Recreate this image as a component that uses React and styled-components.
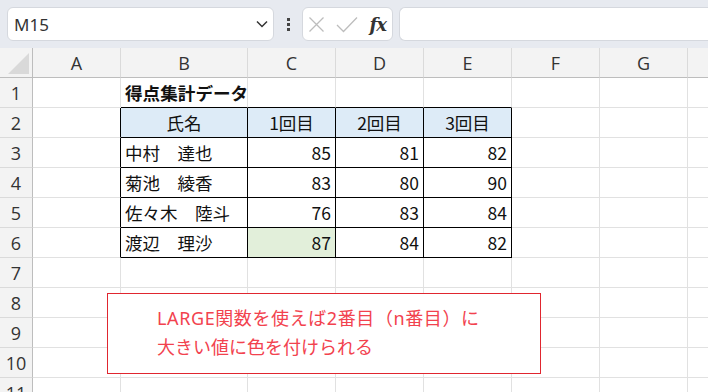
import React from 'react';
import styled, { createGlobalStyle } from 'styled-components';

const GlobalStyle = createGlobalStyle`
    body {
        margin: 0;
        overflow: hidden;
        background: #fff;
        font-family: "Noto Sans", "Noto Sans CJK JP", sans-serif;
    }
`;

const Page = styled.div`
    width: 708px;
    height: 392px;
    overflow: hidden;
    display: flex;
    flex-direction: column;
`;

const Toolbar = styled.div`
    height: 48px;
    flex: none;
    background: #e7eaf0;
    display: flex;
    align-items: center;
    padding: 0 0 0 7px;
    box-sizing: border-box;
`;

const Field = styled.div`
    height: 34px;
    box-sizing: border-box;
    background: #fff;
    border: 1px solid #d5d8de;
    border-radius: 6px;
    display: flex;
    align-items: center;
`;

const NameBox = styled(Field)`
    width: 267px;
    padding: 0 5px 0 6px;
    justify-content: space-between;
    font-size: 17px;
    color: #333;
`;

const Dots = styled.div`
    width: 28px;
    display: flex;
    flex-direction: column;
    align-items: center;
    gap: 2px;

    & > span {
        width: 3px;
        height: 3px;
        background: #444;
    }
`;

const FxGroup = styled(Field)`
    width: 91px;
    padding: 0 6px 0 5px;
    justify-content: space-between;
`;

const Fx = styled.span`
    font-family: "DejaVu Serif", "Liberation Serif", serif;
    font-style: italic;
    font-weight: bold;
    font-size: 18px;
    color: #333;
    letter-spacing: -1px;
`;

const FormulaInput = styled(Field)`
    flex: 1;
    margin-left: 6px;
    border-right: none;
    border-radius: 6px 0 0 6px;
`;

const Sheet = styled.div`
    position: relative;
    flex: 1;
    overflow: hidden;
    display: grid;
    grid-template-columns: 33px 88px 127px repeat(6, 88px);
    grid-auto-rows: 30px;
    grid-template-rows: 30px;
`;

const Corner = styled.div`
    background: #f3f3f3;
    border-right: 1px solid #bdbdbd;
    border-bottom: 1px solid #bdbdbd;
    position: relative;

    &::after {
        content: "";
        position: absolute;
        right: 3px;
        bottom: 3px;
        width: 0;
        height: 0;
        border-left: 21px solid transparent;
        border-bottom: 21px solid #d9d9d9;
    }
`;

const ColHead = styled.div`
    background: #f3f3f3;
    border-right: 1px solid #dadada;
    border-bottom: 1px solid #bdbdbd;
    display: flex;
    align-items: center;
    justify-content: center;
    font-family: "Open Sans", sans-serif;
    font-size: 18px;
    color: #333;
`;

const RowHead = styled.div`
    background: #f3f3f3;
    border-right: 1px solid #bdbdbd;
    border-bottom: 1px solid #dadada;
    display: flex;
    align-items: center;
    justify-content: center;
    font-family: "Open Sans", sans-serif;
    font-size: 18px;
    color: #333;
`;

const Cell = styled.div`
    box-sizing: border-box;
    border-right: 1px solid ${p => (p.$edgeRight ? '#000' : '#e1e1e1')};
    border-bottom: 1px solid ${p => (p.$edgeBottom ? '#000' : '#e1e1e1')};
    background: ${p => p.$fill || '#fff'};
    display: flex;
    align-items: center;
    justify-content: ${p => p.$align || 'flex-start'};
    padding: 0 4px 0 4px;
    font-family: "Noto Sans CJK JP", sans-serif;
    font-size: ${p => (p.$bold ? '17.6px' : '17.5px')};
    font-weight: ${p => (p.$bold ? 700 : 400)};
    color: #111;
    white-space: nowrap;
    overflow: ${p => (p.$bold ? 'visible' : 'hidden')};
`;

const Note = styled.div`
    position: absolute;
    left: 107px;
    top: 245px;
    width: 434px;
    height: 81px;
    box-sizing: border-box;
    background: #fff;
    border: 1px solid #e0262f;
    padding: 10px 0 0 49px;
    font-family: "Noto Sans", "Noto Sans CJK JP", sans-serif;
    font-size: 18px;
    line-height: 29px;
    color: #f2424e;
`;

const NoteLine = styled.div`
    white-space: nowrap;
    letter-spacing: ${p => p.$spacing || '0'};
`;

const letters = ['A', 'B', 'C', 'D', 'E', 'F', 'G', ''];

const HEAD = '#ddebf7';
const GREEN = '#e2efda';

const rows = [
    [null, { v: '得点集計データ', bold: true }, null, null, null],
    [null, { v: '氏名', h: true }, { v: '1回目', h: true }, { v: '2回目', h: true }, { v: '3回目', h: true }],
    [null, { v: '中村　達也' }, { v: 85 }, { v: 81 }, { v: 82 }],
    [null, { v: '菊池　綾香' }, { v: 83 }, { v: 80 }, { v: 90 }],
    [null, { v: '佐々木　陸斗' }, { v: 76 }, { v: 83 }, { v: 84 }],
    [null, { v: '渡辺　理沙' }, { v: 87, fill: GREEN }, { v: 84 }, { v: 82 }],
];

const ChevronIcon = () => (
    <svg width="12" height="8" viewBox="0 0 12 8">
        <path d="M1 1.5 L6 6.5 L11 1.5" fill="none" stroke="#333" strokeWidth="1.5" />
    </svg>
);

const CrossIcon = () => (
    <svg width="17" height="17" viewBox="0 0 17 17">
        <path d="M1.5 1.5 L15.5 15.5 M15.5 1.5 L1.5 15.5" stroke="#bdbdbd" strokeWidth="1.3" fill="none" />
    </svg>
);

const CheckIcon = () => (
    <svg width="22" height="17" viewBox="0 0 22 17">
        <path d="M1 9 L7.5 15.5 L21 1.5" stroke="#bdbdbd" strokeWidth="1.3" fill="none" />
    </svg>
);

const App = () => {
    const inTable = (r, c) => r >= 1 && r <= 5 && c >= 1 && c <= 4;

    return (
        <Page>
            <GlobalStyle />
            <Toolbar>
                <NameBox>
                    <span>M15</span>
                    <ChevronIcon />
                </NameBox>
                <Dots><span /><span /><span /></Dots>
                <FxGroup>
                    <CrossIcon />
                    <CheckIcon />
                    <Fx>fx</Fx>
                </FxGroup>
                <FormulaInput />
            </Toolbar>

            <Sheet>
                <Corner />
                {letters.map((l, i) => <ColHead key={i}>{l}</ColHead>)}

                {Array.from({ length: 11 }).map((_, r) => {
                    const data = rows[r] || [];
                    return (
                        <React.Fragment key={r}>
                            <RowHead>{r + 1}</RowHead>
                            {letters.map((l, c) => {
                                const d = data[c];
                                const table = inTable(r, c);
                                const edgeRight = table || (c === 0 && r >= 1 && r <= 5);
                                const edgeBottom = table || (r === 0 && c >= 1 && c <= 4);
                                const isNum = d && typeof d.v === 'number';
                                return (
                                    <Cell
                                        key={c}
                                        $edgeRight={edgeRight}
                                        $edgeBottom={edgeBottom}
                                        $fill={d && d.h ? HEAD : d && d.fill}
                                        $align={d && d.h ? 'center' : isNum ? 'flex-end' : 'flex-start'}
                                        $bold={d && d.bold}
                                    >
                                        {d ? d.v : ''}
                                    </Cell>
                                );
                            })}
                        </React.Fragment>
                    );
                })}

                <Note>
                    <NoteLine $spacing="0.6px">LARGE関数を使えば2番目（n番目）に</NoteLine>
                    <NoteLine>大きい値に色を付けられる</NoteLine>
                </Note>
            </Sheet>
        </Page>
    );
};

export default App;
